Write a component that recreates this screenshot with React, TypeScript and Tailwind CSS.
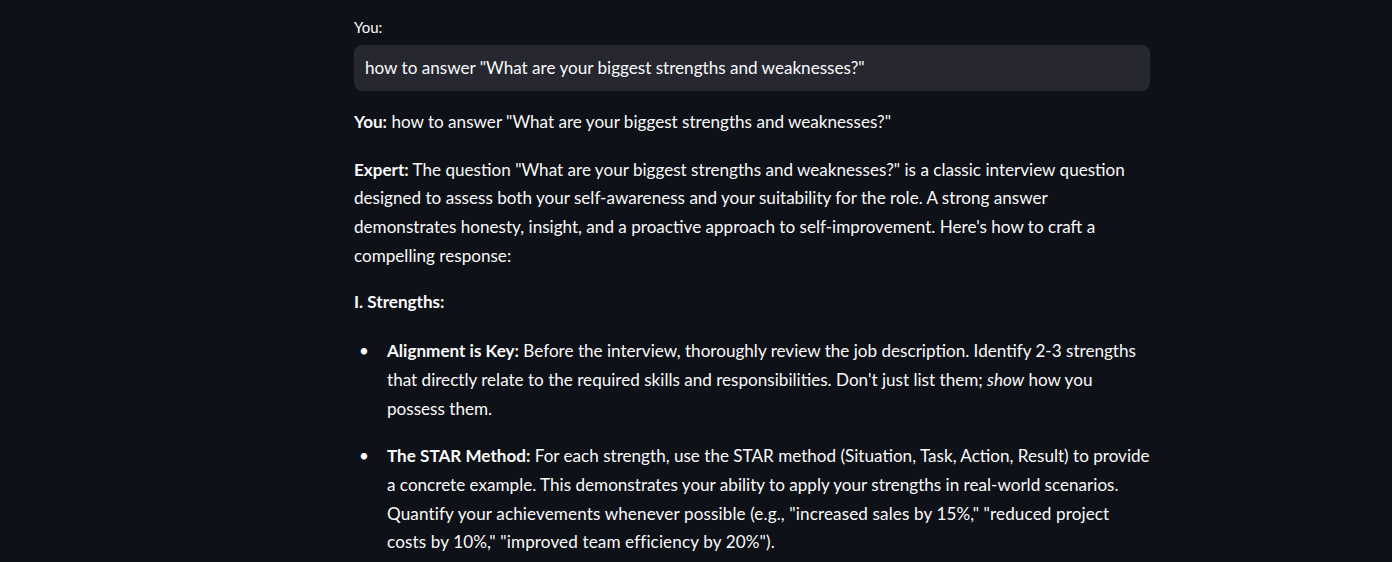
import React from 'react';

const question = 'how to answer "What are your biggest strengths and weaknesses?"';

const App: React.FC = () => {
  return (
    <div
      className="min-h-screen bg-[#0e1117] text-[#fafafa]"
      style={{ fontFamily: 'Lato, "Liberation Sans", sans-serif' }}
    >
      <div className="ml-[354px] w-[796px] pt-[17px] pb-10 text-[17.1px] leading-[28.7px]">
        {/* Chat input */}
        <label className="block text-[15px] leading-[20px] mb-[8px]">You:</label>
        <div className="h-[46px] rounded-[8px] bg-[#262730] px-[11px] flex items-center">
          {question}
        </div>

        {/* Conversation */}
        <p className="mt-[17px] mb-[19px]">
          <strong className="font-bold">You:</strong> {question}
        </p>

        <p className="mb-[17px]">
          <strong className="font-bold">Expert:</strong> The question "What are your biggest strengths and
          weaknesses?" is a classic interview question designed to assess both your self-awareness and your
          suitability for the role. A strong answer demonstrates honesty, insight, and a proactive approach to
          self-improvement. Here's how to craft a compelling response:
        </p>

        <p className="mb-[21px] font-bold">I. Strengths:</p>

        <ul className="pl-[33px]">
          <li className="relative mb-[19px]">
            <span className="absolute left-[-28px] top-0">•</span>
            <strong className="font-bold">Alignment is Key:</strong> Before the interview, thoroughly review the
            job description. Identify 2-3 strengths that directly relate to the required skills and
            responsibilities. Don't just list them; <em>show</em> how you possess them.
          </li>
          <li className="relative">
            <span className="absolute left-[-28px] top-0">•</span>
            <strong className="font-bold">The STAR Method:</strong> For each strength, use the STAR method
            (Situation, Task, Action, Result) to provide a concrete example. This demonstrates your ability to
            apply your strengths in real-world scenarios.{' '}
            <span className="tracking-[0.12px]">
              Quantify your achievements whenever possible (e.g., "increased sales by 15%," "reduced project
              costs by 10%," "improved team efficiency by 20%").
            </span>
          </li>
        </ul>
      </div>
    </div>
  );
};

export default App;
